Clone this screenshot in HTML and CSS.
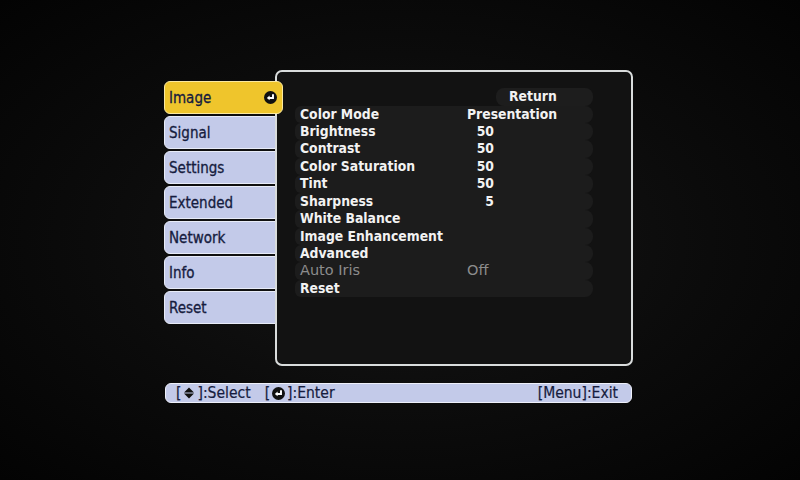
FILE: index.html
```html
<!DOCTYPE html>
<html lang="en">
<head>
  <meta charset="UTF-8">
  <title>Projector Menu - Image</title>
  <link rel="stylesheet" href="styles.css">
</head>
<body>
  <div class="osd">
    <div class="top">
      <!-- TABS -->
      <div class="tabs">
        <div class="tab active">Image
          <svg class="enter" viewBox="0 0 12 12"><circle cx="6" cy="6" r="6" fill="#111"/><path d="M8.3 3v3.4H4.6" fill="none" stroke="#fff" stroke-width="1.8"/><path d="M2.6 6.4l2.6-2.2v4.4z" fill="#fff"/></svg>
        </div>
        <div class="tab">Signal</div>
        <div class="tab">Settings</div>
        <div class="tab">Extended</div>
        <div class="tab">Network</div>
        <div class="tab">Info</div>
        <div class="tab">Reset</div>
      </div>

      <!-- PANEL -->
      <div class="panel">
        <div class="return-row"><span class="return">Return</span></div>
        <div class="rows">
          <div class="row"><span class="label">Color Mode</span><span class="val">Presentation</span></div>
          <div class="row"><span class="label">Brightness</span><span class="val num">50</span></div>
          <div class="row"><span class="label">Contrast</span><span class="val num">50</span></div>
          <div class="row"><span class="label">Color Saturation</span><span class="val num">50</span></div>
          <div class="row"><span class="label">Tint</span><span class="val num">50</span></div>
          <div class="row"><span class="label">Sharpness</span><span class="val num">5</span></div>
          <div class="row"><span class="label">White Balance</span></div>
          <div class="row"><span class="label">Image Enhancement</span></div>
          <div class="row"><span class="label">Advanced</span></div>
          <div class="row disabled"><span class="label">Auto Iris</span><span class="val">Off</span></div>
          <div class="row"><span class="label">Reset</span></div>
        </div>
      </div>
    </div>

    <!-- HELP BAR -->
    <div class="help">
      <span>[<svg class="arrows" viewBox="0 0 12 12"><path d="M6 0.5L11 5.4H1z M6 11.5L11 6.6H1z" fill="#111"/></svg>]:Select</span>
      <span class="gap">[<svg class="enter small" viewBox="0 0 12 12"><circle cx="6" cy="6" r="6" fill="#111"/><path d="M8.3 3v3.4H4.6" fill="none" stroke="#fff" stroke-width="1.8"/><path d="M2.6 6.4l2.6-2.2v4.4z" fill="#fff"/></svg>]:Enter</span>
      <span class="right">[Menu]:Exit</span>
    </div>
  </div>
</body>
</html>
```

FILE: styles.css
```css
body {
  margin: 0;
  height: 480px;
  overflow: hidden;
  background: radial-gradient(ellipse at 50% 50%, #161616 0%, #0b0b0b 55%, #030303 100%);
  font-family: 'DejaVu Sans', sans-serif;
}
.osd {
  width: 469px;
  padding: 70px 0 0 164px;
  display: flex;
  flex-direction: column;
  gap: 17px;
}
.top {
  display: flex;
  align-items: flex-start;
}
.tabs {
  width: 119px;
  margin-top: 11px;
  margin-right: -8px;
  display: flex;
  flex-direction: column;
  gap: 2px;
}
.tab {
  position: relative;
  z-index: 1;
  height: 33px;
  box-sizing: border-box;
  width: 119px;
  padding: 0 5px 0 4px;
  display: flex;
  align-items: center;
  justify-content: space-between;
  background: #c3cae9;
  border: 1px solid #e8ecf8;
  border-radius: 6px 0 0 6px;
  color: #161c3e;
  font-size: 15px;
  font-family: 'DejaVu Sans Condensed', 'DejaVu Sans', sans-serif;
  font-stretch: condensed;
  -webkit-text-stroke: 0.3px #161c3e;
}
.tab.active {
  z-index: 3;
  background: #efc52c;
  border-color: #fbe9a0;
  border-radius: 6px;
}
.enter {
  width: 13px;
  height: 13px;
}
.panel {
  position: relative;
  z-index: 2;
  width: 358px;
  height: 296px;
  box-sizing: border-box;
  border: 2px solid #d9dcdc;
  border-radius: 7px;
  background: #121212;
  padding: 16px 0 0 18px;
  color: #f2f2f2;
  font-family: 'DejaVu Sans Condensed', 'DejaVu Sans', sans-serif;
  font-stretch: condensed;
  font-weight: bold;
  font-size: 13.8px;
}
.return-row {
  width: 298px;
  display: flex;
  justify-content: flex-end;
}
.return {
  width: 97px;
  height: 17.5px;
  box-sizing: border-box;
  padding-left: 13px;
  line-height: 17.5px;
  background: #1d1d1d;
  border-radius: 8px;
}
.rows {
  width: 298px;
}
.row {
  height: 17.45px;
  line-height: 17.45px;
  display: flex;
  padding-left: 5px;
  background: #1c1c1c;
  border-radius: 6px 8px 8px 6px;
}
.label {
  width: 167px;
}
.val.num {
  width: 27px;
  text-align: right;
}
.row.disabled {
  color: #8c8c8c;
  font-family: 'DejaVu Sans', sans-serif;
  font-stretch: normal;
  font-weight: normal;
  font-size: 14.5px;
}
.help {
  width: 467px;
  margin-left: 1px;
  height: 20px;
  box-sizing: border-box;
  display: flex;
  align-items: center;
  padding: 0 13px 0 10px;
  background: #c3cae9;
  border: 1px solid #eef0fa;
  border-radius: 6px;
  color: #161c3e;
  font-size: 15.5px;
  font-family: 'DejaVu Sans Condensed', 'DejaVu Sans', sans-serif;
  font-stretch: condensed;
  -webkit-text-stroke: 0.2px #161c3e;
}
.help .gap {
  margin-left: 14px;
}
.help .right {
  margin-left: auto;
}
.arrows {
  width: 12px;
  height: 12px;
  margin: 0 2px;
  vertical-align: -1px;
}
.enter.small {
  width: 13px;
  height: 13px;
  margin: 0 2px;
  vertical-align: -2px;
}
```
